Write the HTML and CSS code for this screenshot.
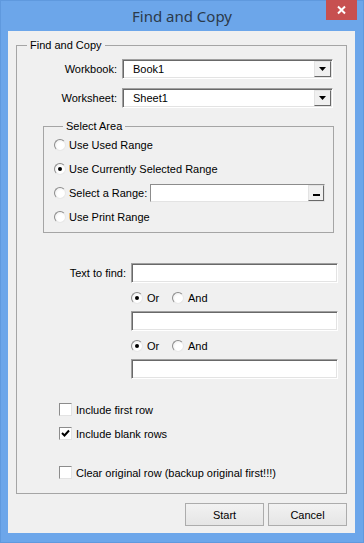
FILE: index.html
```html
<!DOCTYPE html>
<html lang="en">
  <head>
    <meta charset="UTF-8" />
    <title>Find and Copy</title>
    <link rel="stylesheet" href="styles.css">
  </head>
  <body>
    <div class="window">
      <div class="titlebar">
        <span class="title">Find and Copy</span>
        <div class="close">
          <svg width="31" height="20" viewBox="0 0 31 20">
            <path d="M12 6.5 L19 13.5 M19 6.5 L12 13.5" stroke="#fff" stroke-width="2" fill="none" />
          </svg>
        </div>
      </div>

      <div class="client">
        <fieldset class="group main-group">
          <legend>Find and Copy</legend>

          <div class="pick-grid">
            <label>Workbook:</label>
            <div class="combo">
              <span>Book1</span>
              <div class="drop">
                <svg width="7" height="4" viewBox="0 0 7 4"><polygon points="0,0 7,0 3.5,4" fill="#000" /></svg>
              </div>
            </div>
            <label>Worksheet:</label>
            <div class="combo">
              <span>Sheet1</span>
              <div class="drop">
                <svg width="7" height="4" viewBox="0 0 7 4"><polygon points="0,0 7,0 3.5,4" fill="#000" /></svg>
              </div>
            </div>
          </div>

          <fieldset class="group area-group">
            <legend>Select Area</legend>
            <div class="opt"><span class="radio"></span>Use Used Range</div>
            <div class="opt"><span class="radio checked"></span>Use Currently Selected Range</div>
            <div class="opt">
              <span class="radio"></span>Select a Range:
              <div class="range-box">
                <div class="range-btn"></div>
              </div>
            </div>
            <div class="opt"><span class="radio"></span>Use Print Range</div>
          </fieldset>

          <div class="find-row">
            <label>Text to find:</label>
            <div class="find-col">
              <div class="textbox"></div>
              <div class="choice">
                <div class="opt"><span class="radio checked"></span>Or</div>
                <div class="opt"><span class="radio"></span>And</div>
              </div>
              <div class="textbox"></div>
              <div class="choice">
                <div class="opt"><span class="radio checked"></span>Or</div>
                <div class="opt"><span class="radio"></span>And</div>
              </div>
              <div class="textbox"></div>
            </div>
          </div>

          <div class="check first"><span class="box"></span>Include first row</div>
          <div class="check second">
            <span class="box">
              <svg width="11" height="11" viewBox="0 0 11 11"><path d="M2 5 L4.5 7.5 L9 2.5" stroke="#000" stroke-width="2" fill="none" /></svg>
            </span>Include blank rows
          </div>
          <div class="check third"><span class="box"></span>Clear original row (backup original first!!!)</div>
        </fieldset>

        <div class="actions">
          <button>Start</button>
          <button>Cancel</button>
        </div>
      </div>
    </div>
  </body>
</html>
```

FILE: styles.css
```css
body {
  margin: 0;
  font-family: "Liberation Sans", Arial, sans-serif;
  font-size: 11px;
  color: #000;
}

.window {
  width: 364px;
  height: 543px;
  box-sizing: border-box;
  background-color: #6ca6ea;
  border: 1px solid #5f99de;
  display: flex;
  flex-direction: column;
}
.titlebar {
  height: 30px;
  position: relative;
  display: flex;
  justify-content: center;
  align-items: center;
}
.title {
  font-family: "Noto Sans", "Open Sans", sans-serif;
  font-size: 15px;
  color: #2b3a4b;
  margin-top: -1px;
}
.close {
  position: absolute; /* sits over the title bar corner */
  top: -1px;
  right: 6px;
  width: 31px;
  height: 20px;
  background-color: #c75050;
}
.close svg {
  display: block;
}

.client {
  flex: 1;
  margin: 0 8px 9px 7px;
  padding: 8px 8px 0 8px;
  background-color: #f0f0f0;
}

.group {
  margin: 0;
  padding: 0;
  border: 1px solid #a5a5a5;
  min-width: 0;
}
.group legend {
  padding: 0 3px;
  line-height: 13px;
}
.main-group {
  padding-bottom: 14px;
}
.main-group > legend {
  margin-left: 10px;
}

.pick-grid {
  display: grid;
  grid-template-columns: 100px 211px;
  column-gap: 5px;
  row-gap: 9px;
  margin-top: 7px;
  align-items: center;
}
.pick-grid label,
.find-row label {
  text-align: right;
}
.combo {
  height: 20px;
  box-sizing: border-box;
  background-color: #fff;
  border: 1px solid;
  border-color: #a0a0a0 #fff #fff #a0a0a0;
  box-shadow: inset 1px 1px 0 #696969, inset -1px -1px 0 #e3e3e3;
  display: flex;
  align-items: center;
  padding-left: 10px;
}
.drop {
  margin-left: auto;
  margin-right: 1px;
  width: 17px;
  height: 16px;
  box-sizing: border-box;
  background-color: #f0f0f0;
  border: 1px solid;
  border-color: #e3e3e3 #696969 #696969 #e3e3e3;
  display: flex;
  align-items: center;
  justify-content: center;
}

.area-group {
  margin: 12px 12px 0 26px;
  padding: 3px 0 6px 10px;
}
.area-group > legend {
  margin-left: 9px;
}
.opt {
  display: flex;
  align-items: center;
  height: 18px;
}
.area-group .opt + .opt {
  margin-top: 6px;
}
.radio {
  width: 12px;
  height: 12px;
  box-sizing: border-box;
  border-radius: 50%;
  border: 1px solid;
  border-color: #8c8c8c #e8e8e8 #e8e8e8 #8c8c8c;
  background: radial-gradient(circle at 60% 60%, #fff 40%, #e4e4e4 100%);
  margin-right: 3px;
  position: relative;
}
.radio.checked::after {
  content: "";
  position: absolute;
  left: 3px;
  top: 3px;
  width: 4px;
  height: 4px;
  border-radius: 50%;
  background-color: #000;
}
.range-box {
  margin-left: 3px;
  width: 175px;
  height: 18px;
  box-sizing: border-box;
  background-color: #fff;
  border: 1px solid;
  border-color: #8c8c8c #e3e3e3 #e3e3e3 #8c8c8c;
  display: flex;
  justify-content: flex-end;
}
.range-btn {
  width: 16px;
  height: 16px;
  box-sizing: border-box;
  background-color: #f0f0f0;
  border: 1px solid;
  border-color: #e3e3e3 #696969 #696969 #e3e3e3;
  position: relative;
}
.range-btn::after {
  content: "";
  position: absolute;
  left: 4px;
  top: 8px;
  width: 7px;
  height: 2px;
  background-color: #000;
}

.find-row {
  display: flex;
  align-items: flex-start;
  gap: 5px;
  margin-top: 30px;
}
.find-row label {
  width: 109px;
  line-height: 20px;
}
.find-col {
  width: 207px;
  display: flex;
  flex-direction: column;
}
.textbox {
  height: 20px;
  box-sizing: border-box;
  background-color: #fff;
  border: 1px solid;
  border-color: #a0a0a0 #fff #fff #a0a0a0;
  box-shadow: inset 1px 1px 0 #696969, inset -1px -1px 0 #e3e3e3;
}
.choice {
  display: flex;
  align-items: center;
  margin: 6px 0 4px;
}
.choice .opt:first-child {
  width: 41px;
}
.choice .radio {
  margin-right: 4px;
}

.check {
  display: flex;
  align-items: center;
  height: 13px;
  margin-left: 42px;
}
.check.first {
  margin-top: 24px;
}
.check.second {
  margin-top: 11px;
}
.check.third {
  margin-top: 26px;
}
.box {
  width: 13px;
  height: 13px;
  box-sizing: border-box;
  background-color: #fff;
  border: 1px solid;
  border-color: #8c8c8c #e3e3e3 #e3e3e3 #8c8c8c;
  margin-right: 4px;
  display: flex;
  align-items: center;
  justify-content: center;
}

.actions {
  display: flex;
  justify-content: flex-end;
  gap: 4px;
  margin-top: 9px;
}
button {
  width: 79px;
  height: 23px;
  font-family: "Liberation Sans", Arial, sans-serif;
  font-size: 11px;
  color: #000;
  border: 1px solid #acacac;
  background: linear-gradient(#f2f2f2, #e5e5e5);
  padding: 0;
}
```
